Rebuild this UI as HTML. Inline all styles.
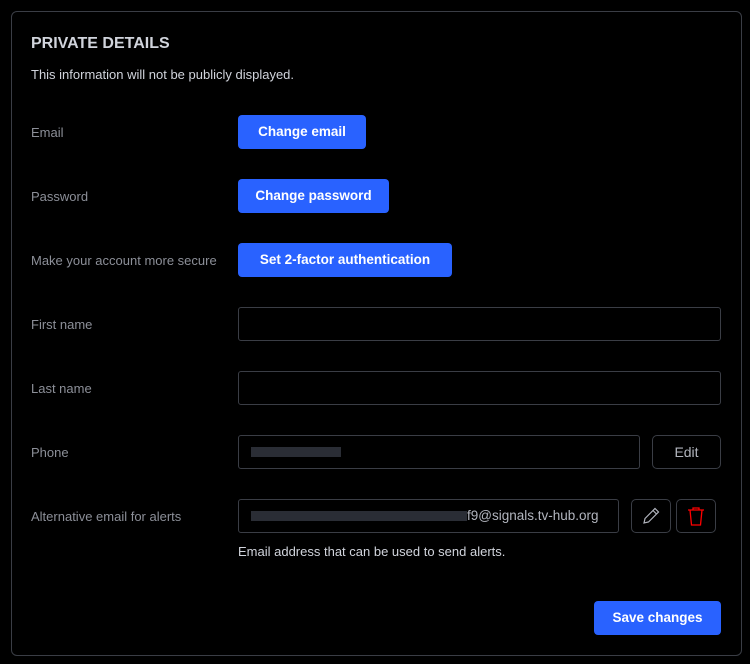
<!DOCTYPE html><html><head><style>
*{box-sizing:border-box;margin:0;padding:0}
body{width:750px;height:664px;background:#000;font-family:"Liberation Sans",sans-serif;position:relative;overflow:hidden}
.card{position:absolute;left:11px;top:11px;width:731px;height:645px;border:1px solid #3a3d45;border-radius:6px}
.a{position:absolute}
.t{left:31px;top:35px;font-size:16px;font-weight:bold;color:#d1d4dc}
.s{left:31px;top:67px;font-size:13px;color:#d1d4dc}
.l{left:31px;font-size:13px;color:#8c8f98}
.b{background:#2962ff;color:#fff;font-size:13.5px;font-weight:bold;height:34px;line-height:34px;border-radius:4px;text-align:center;left:238px}
.i{border:1px solid #3a3d45;border-radius:3px;height:34px}
.o{border:1px solid #3a3d45;border-radius:5px;height:34px;color:#b2b5be;font-size:14px;text-align:center;line-height:32px}
.bl{background:#2a2d35;height:10px;top:11px}
</style></head><body>
<div class="card"></div>
<div class="a t">PRIVATE DETAILS</div>
<div class="a s">This information will not be publicly displayed.</div>
<div class="a l" style="top:125px">Email</div>
<div class="a b" style="top:115px;width:128px">Change email</div>
<div class="a l" style="top:189px">Password</div>
<div class="a b" style="top:179px;width:151px">Change password</div>
<div class="a l" style="top:253px">Make your account more secure</div>
<div class="a b" style="top:243px;width:214px">Set 2-factor authentication</div>
<div class="a l" style="top:317px">First name</div>
<div class="a i" style="left:238px;top:307px;width:483px"></div>
<div class="a l" style="top:381px">Last name</div>
<div class="a i" style="left:238px;top:371px;width:483px"></div>
<div class="a l" style="top:445px">Phone</div>
<div class="a i" style="left:238px;top:435px;width:402px"><div class="a bl" style="left:12px;width:90px"></div></div>
<div class="a o" style="left:652px;top:435px;width:69px">Edit</div>
<div class="a l" style="top:509px">Alternative email for alerts</div>
<div class="a i" style="left:238px;top:499px;width:381px"><div class="a bl" style="left:12px;width:216px"></div><div class="a" style="left:228px;top:8px;font-size:13.5px;color:#b2b5be">f9@signals.tv-hub.org</div></div>
<div class="a o" style="left:631px;top:499px;width:40px"><svg width="22" height="22" viewBox="0 0 22 22" style="margin-top:5px"><path d="M4 18l1-4.5 10-10 3.5 3.5-10 10z M13 5.5l3.5 3.5" fill="none" stroke="#b2b5be" stroke-width="1.2"/></svg></div>
<div class="a o" style="left:676px;top:499px;width:40px"><svg width="20" height="22" viewBox="0 0 20 22" style="margin-top:5px"><path d="M2 5h16M7 5V3h6v2M4 5l1.5 15h9L16 5" fill="none" stroke="#f00" stroke-width="1.3"/></svg></div>
<div class="a" style="left:238px;top:544px;font-size:13px;color:#d1d4dc">Email address that can be used to send alerts.</div>
<div class="a b" style="left:594px;top:601px;width:127px;height:34px">Save changes</div>
</body></html>
